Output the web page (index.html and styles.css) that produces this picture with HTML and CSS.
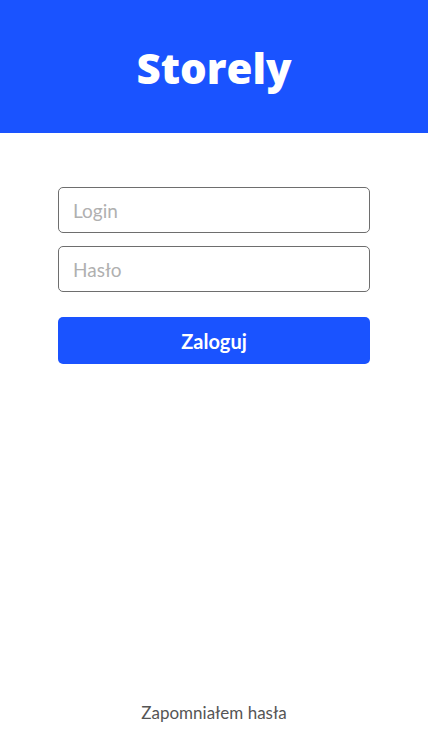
FILE: index.html
```html
<!DOCTYPE html>
<html lang="pl">
<head>
<meta charset="utf-8">
<title>Storely</title>
<link rel="stylesheet" href="styles.css">
</head>
<body>
<div class="page">
  <header class="header">
    <h1 class="logo">Storely</h1>
  </header>
  <main class="main">
    <form class="form">
      <input class="field" type="text" placeholder="Login">
      <input class="field" type="password" placeholder="Hasło">
      <button class="btn" type="button">Zaloguj</button>
    </form>
  </main>
  <footer class="footer">
    <a class="forgot" href="#">Zapomniałem hasła</a>
  </footer>
</div>
</body>
</html>
```
FILE: styles.css
```css
* { box-sizing: border-box; }
html, body { margin: 0; padding: 0; }
body {
  font-family: Lato, "Open Sans", sans-serif;
  background: #fff;
}
.page {
  height: 756px;
  display: flex;
  flex-direction: column;
}
.header {
  height: 133px;
  background: #1a53ff;
  display: flex;
  align-items: center;
  justify-content: center;
}
.logo {
  margin: 0;
  color: #fff;
  font-family: "Open Sans", sans-serif;
  font-weight: 800;
  font-size: 42px;
  letter-spacing: 0;
  padding-top: 2px;
}
.main {
  flex: 1;
  display: flex;
  justify-content: center;
  padding-top: 54px;
}
.form {
  width: 312px;
  display: flex;
  flex-direction: column;
}
.field {
  height: 46px;
  border: 1px solid #6e6e6e;
  border-radius: 5px;
  padding: 0 14px;
  font-family: Lato, sans-serif;
  font-size: 19px;
  color: #333;
  margin-bottom: 13px;
  outline: none;
}
.field::placeholder { color: #b0b0b0; }
.btn {
  margin-top: 12px;
  height: 47px;
  border: none;
  border-radius: 5px;
  background: #1a53ff;
  color: #fff;
  font-family: Lato, sans-serif;
  font-weight: 700;
  font-size: 20px;
  cursor: pointer;
}
.footer {
  display: flex;
  justify-content: center;
  padding-bottom: 33px;
}
.forgot {
  font-family: Lato, sans-serif;
  font-size: 17px;
  color: #555;
  text-decoration: none;
}
```
